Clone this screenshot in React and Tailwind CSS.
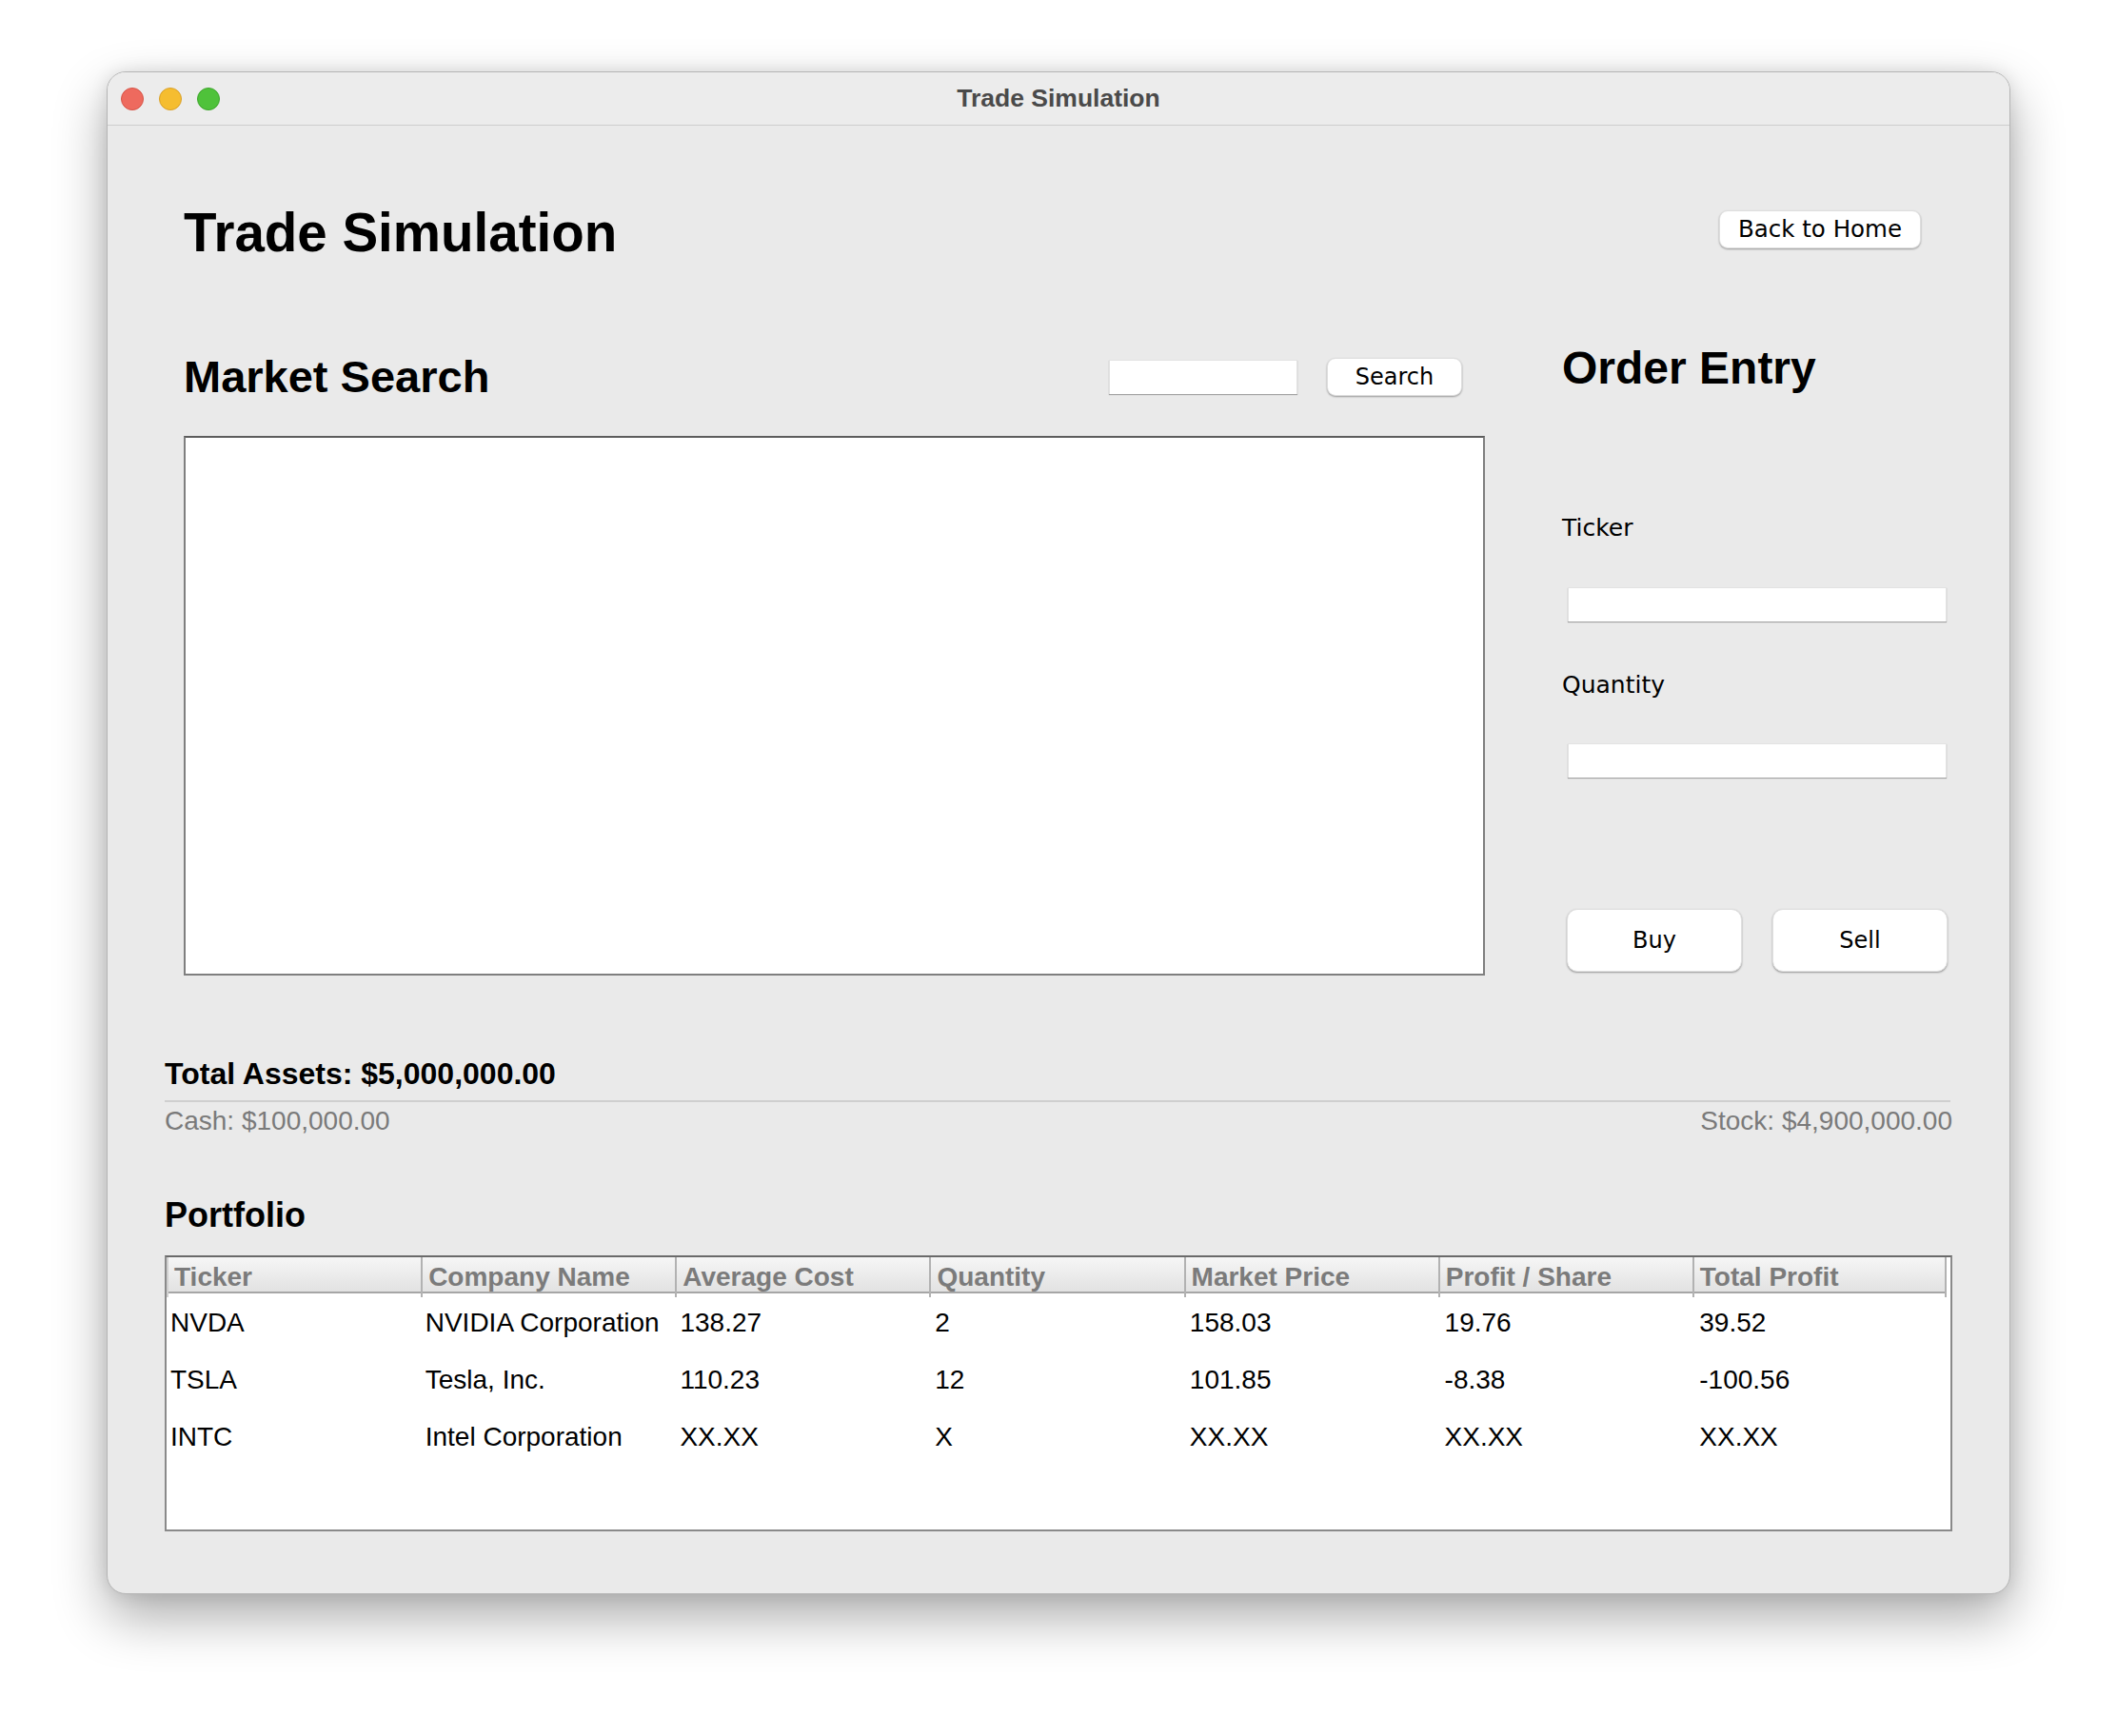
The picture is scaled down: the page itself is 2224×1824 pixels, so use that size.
export default function App() {
  const cols = ["Ticker", "Company Name", "Average Cost", "Quantity", "Market Price", "Profit / Share", "Total Profit"];
  const rows = [
    ["NVDA", "NVIDIA Corporation", "138.27", "2", "158.03", "19.76", "39.52"],
    ["TSLA", "Tesla, Inc.", "110.23", "12", "101.85", "-8.38", "-100.56"],
    ["INTC", "Intel Corporation", "XX.XX", "X", "XX.XX", "XX.XX", "XX.XX"],
  ];
  const aqua = "font-['DejaVu_Sans',sans-serif]";
  return (
    <div className="w-[2224px] h-[1824px] bg-white pl-[112px] pt-[75px] font-['Liberation_Sans',Arial,sans-serif] text-black">
      <div className="w-[2000px] h-[1600px] rounded-[20px] bg-[#eaeaea] border border-[#b5b5b5] shadow-[0_24px_55px_rgba(0,0,0,0.33),0_0_18px_rgba(0,0,0,0.10)] overflow-hidden flex flex-col">
        {/* Title bar */}
        <div className="h-[56px] shrink-0 grid grid-cols-[1fr_auto_1fr] items-center bg-[#ececec] border-b border-[#cdcdcd]">
          <div className="flex gap-[16px] pl-[14px]">
            <span className="w-[24px] h-[24px] rounded-full bg-[#ee6a5e] border border-[#d65447]" />
            <span className="w-[24px] h-[24px] rounded-full bg-[#f5bd30] border border-[#d9a02a]" />
            <span className="w-[24px] h-[24px] rounded-full bg-[#4fc23a] border border-[#3da52c]" />
          </div>
          <span className="text-[26.5px] font-bold text-[#4a4a4a]">Trade Simulation</span>
          <div />
        </div>

        {/* Content */}
        <div className="flex-1 flex flex-col pt-[85px] px-[60px]">
          <div className="pl-[20px] pr-[5px]">
            {/* Row 1 */}
            <div className="flex items-start justify-between">
              <h1 className="text-[56.5px] font-bold leading-none">Trade Simulation</h1>
              <button className={`${aqua} mt-[4px] mr-[28px] w-[212px] h-[40px] rounded-[9px] bg-white text-[24.5px] text-black shadow-[0_1px_2px_rgba(0,0,0,0.35)] border border-[#dedede]`}>
                Back to Home
              </button>
            </div>

            {/* Row 2 */}
            <div className="flex mt-[89px]">
              <div className="w-[1367px] pt-[9px]">
                <div className="h-[48px] flex items-center">
                  <h2 className="text-[47px] font-bold leading-none">Market Search</h2>
                  <div className="ml-auto w-[198px] h-[36px] bg-white border-t border-l border-r border-[#e2e2e2] shadow-[0_1px_1px_rgba(0,0,0,0.3)]" />
                  <button className={`${aqua} ml-[31px] mr-[24px] w-[142px] h-[40px] rounded-[9px] bg-white text-[24px] shadow-[0_1px_2px_rgba(0,0,0,0.35)] border border-[#dedede]`}>
                    Search
                  </button>
                </div>
                <div className="mt-[38px] h-[567px] bg-white border-2 border-[#7f7f7f] border-t-[#5c5c5c]" />
              </div>

              <div className="ml-[81px] w-[405px] flex flex-col">
                <h2 className="text-[48px] font-bold leading-none">Order Entry</h2>
                <div className={`${aqua} mt-[131px] text-[25px] leading-none`}>Ticker</div>
                <div className="mt-[50px] ml-[6px] w-[398px] h-[36px] bg-white border-t border-l border-r border-[#e2e2e2] shadow-[0_1px_1px_rgba(0,0,0,0.3)]" />
                <div className={`${aqua} mt-[54px] text-[25px] leading-none`}>Quantity</div>
                <div className="mt-[49px] ml-[6px] w-[398px] h-[36px] bg-white border-t border-l border-r border-[#e2e2e2] shadow-[0_1px_1px_rgba(0,0,0,0.3)]" />
                <div className="mt-[138px] pl-[5px] flex gap-[32px]">
                  <button className={`${aqua} w-[184px] h-[66px] rounded-[11px] bg-white text-[24px] shadow-[0_1px_2px_rgba(0,0,0,0.35)] border border-[#e0e0e0]`}>Buy</button>
                  <button className={`${aqua} w-[184px] h-[66px] rounded-[11px] bg-white text-[24px] shadow-[0_1px_2px_rgba(0,0,0,0.35)] border border-[#e0e0e0]`}>Sell</button>
                </div>
              </div>
            </div>
          </div>

          {/* Summary */}
          <div className="mt-[87px] text-[32px] font-bold leading-none">Total Assets: $5,000,000.00</div>
          <div className="mt-[12px] mr-[2px] h-[2px] bg-[#cfcfcf]" />
          <div className="mt-[6px] flex justify-between text-[28px] leading-none text-[#7a7a7a]">
            <span>Cash: $100,000.00</span>
            <span>Stock: $4,900,000.00</span>
          </div>

          <div className="mt-[67px] text-[36px] font-bold leading-none">Portfolio</div>

          {/* Table */}
          <div className="mt-[24px] h-[290px] bg-white border-2 border-[#8a8a8a] border-t-[#6a6a6a]">
            <div className="grid grid-cols-7 h-[38px] bg-gradient-to-b from-[#f6f6f6] to-[#e2e2e2] border-b-2 border-[#a6a6a6] mr-[4px]">
              {cols.map((c, i) => (
                <div key={c} className={`flex items-center pl-[6px] text-[28px] font-bold text-[#7b7b7b] whitespace-nowrap border-l-2 ${i === 0 ? "border-[#d0d0d0]" : "border-[#b2b2b2]"} ${i === 6 ? "border-r-2 border-r-[#b2b2b2]" : ""}`}>
                  {c}
                </div>
              ))}
            </div>
            {rows.map((r) => (
              <div key={r[0]} className="grid grid-cols-7 h-[60px] pt-[2px]">
                {r.map((v, i) => (
                  <div key={i} className="flex items-center pl-[4px] text-[28px] whitespace-nowrap">{v}</div>
                ))}
              </div>
            ))}
          </div>
        </div>
      </div>
    </div>
  );
}
